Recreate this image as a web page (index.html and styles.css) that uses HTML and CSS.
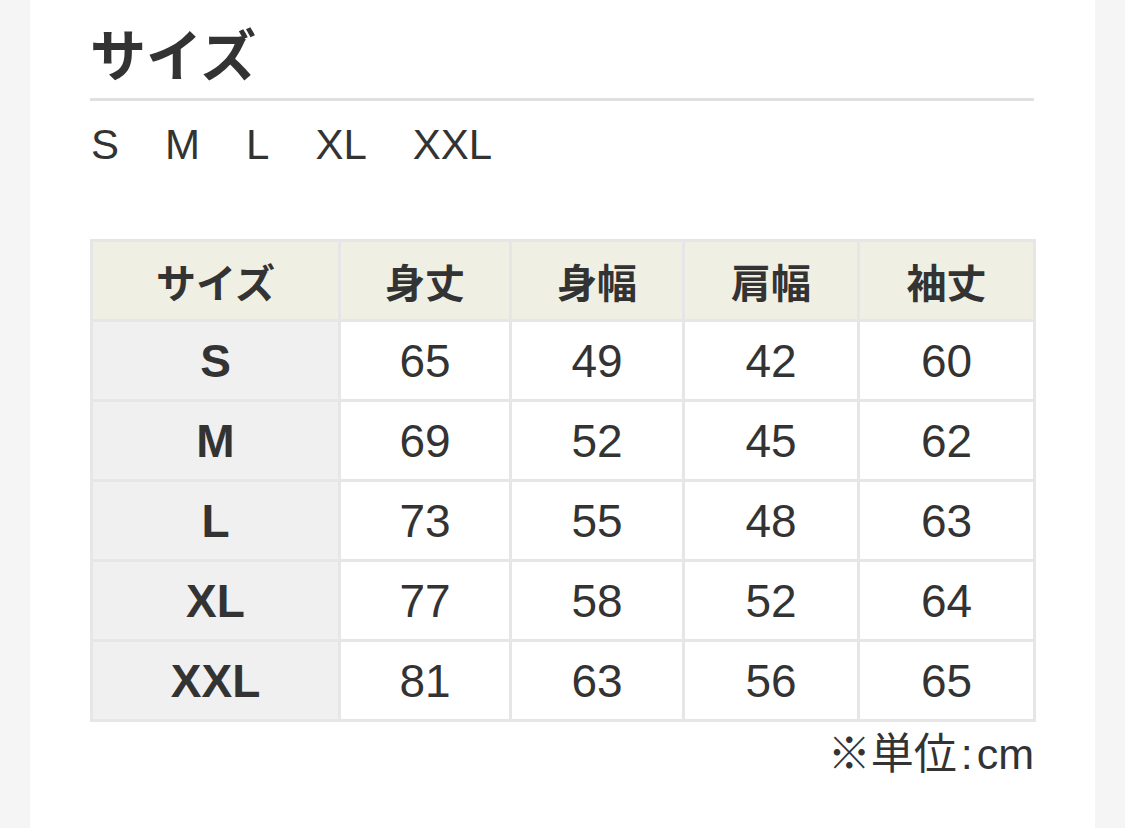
FILE: index.html
```html
<!DOCTYPE html>
<html lang="ja">
<head>
<meta charset="utf-8">
<link rel="stylesheet" href="styles.css">
</head>
<body>
<div class="panel">
  <h2 class="title">サイズ</h2>
  <ul class="sizes">
    <li>S</li><li>M</li><li>L</li><li>XL</li><li>XXL</li>
  </ul>
  <table class="chart">
    <colgroup>
      <col class="c1"><col class="c2"><col class="c3"><col class="c4"><col class="c5">
    </colgroup>
    <thead>
      <tr><th>サイズ</th><th>身丈</th><th>身幅</th><th>肩幅</th><th>袖丈</th></tr>
    </thead>
    <tbody>
      <tr><th>S</th><td>65</td><td>49</td><td>42</td><td>60</td></tr>
      <tr><th>M</th><td>69</td><td>52</td><td>45</td><td>62</td></tr>
      <tr><th>L</th><td>73</td><td>55</td><td>48</td><td>63</td></tr>
      <tr><th>XL</th><td>77</td><td>58</td><td>52</td><td>64</td></tr>
      <tr><th>XXL</th><td>81</td><td>63</td><td>56</td><td>65</td></tr>
    </tbody>
  </table>
  <p class="note">※単位<span class="colon">:</span>cm</p>
</div>
</body>
</html>
```

FILE: styles.css
```css
html, body {
  margin: 0;
  padding: 0;
  background: #f5f5f5;
}
body {
  font-family: "Liberation Sans", "Noto Sans CJK JP", sans-serif;
  color: #333;
}
.panel {
  margin-left: 30px;
  width: 1065px;
  min-height: 828px;
  box-sizing: border-box;
  padding: 16px 61px 0 60px;
  background: #fff;
}
.title {
  margin: 0;
  font-family: "Noto Sans CJK JP", sans-serif;
  font-size: 56px;
  font-weight: 700;
  line-height: 72px;
  padding-bottom: 10px;
  border-bottom: 3px solid #e0e0e0;
}
.sizes {
  list-style: none;
  margin: 0;
  padding: 16px 0 0 1px;
  display: flex;
  gap: 46px;
  font-size: 42px;
  font-weight: 400;
  line-height: 56px;
}
.chart {
  margin-top: 66px;
  width: 944px;
  table-layout: fixed;
  border-collapse: collapse;
  font-size: 46px;
}
.c1 { width: 248px; }
.c2 { width: 171px; }
.c3 { width: 173px; }
.c4 { width: 175px; }
.c5 { width: 176px; }
.chart th, .chart td {
  border: 3px solid #e6e6e6;
  height: 77px;
  padding: 0;
  text-align: center;
  vertical-align: middle;
}
.chart td {
  font-weight: 400;
  background: #fff;
}
.chart thead th {
  background: #f0efe3;
  font-family: "Noto Sans CJK JP", sans-serif;
  font-size: 40px;
  font-weight: 700;
}
.chart tbody th {
  background: #f0f0f0;
  font-size: 46px;
  font-weight: 700;
}
.note {
  margin: 4px 0 0;
  text-align: right;
  font-size: 43px;
  font-weight: 400;
  line-height: 56px;
}
.colon {
  margin: 0 4px;
}
```
